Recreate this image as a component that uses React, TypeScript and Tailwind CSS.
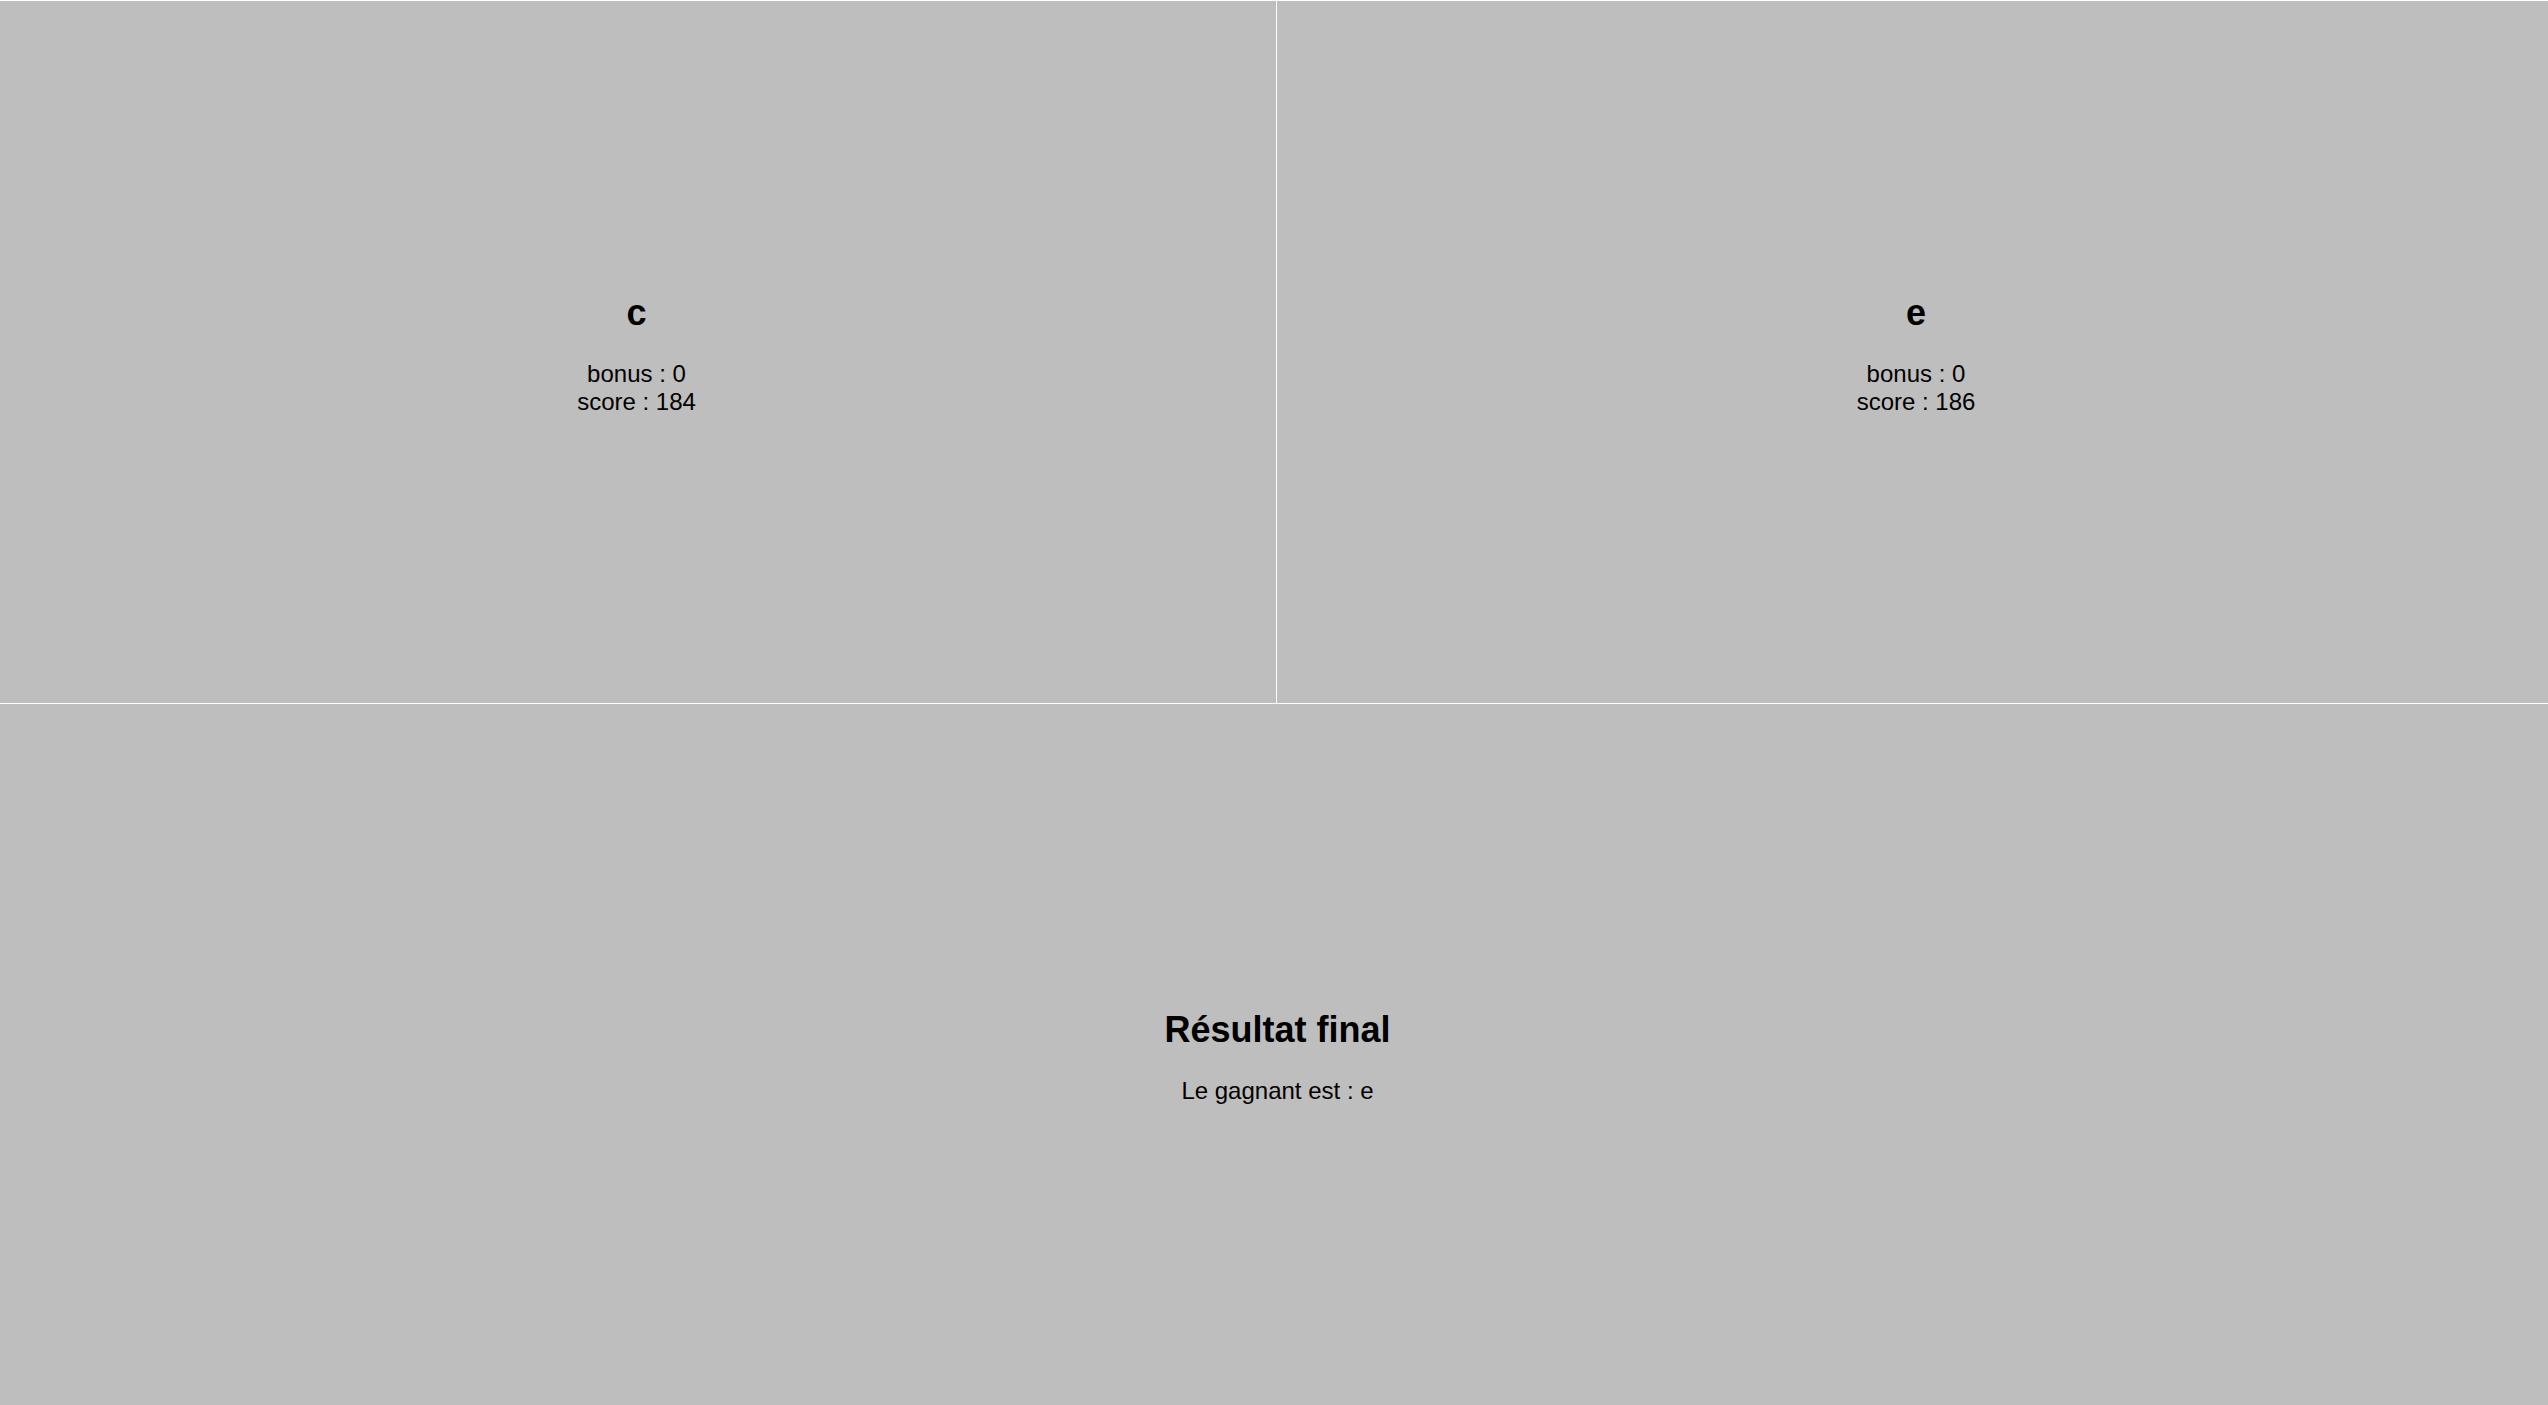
const players = [
  { name: 'c', bonus: 0, score: 184 },
  { name: 'e', bonus: 0, score: 186 },
];

export default function App() {
  const winner = players.reduce((a, b) => (b.score > a.score ? b : a));

  return (
    <div
      className="h-screen w-screen overflow-hidden bg-white text-black"
      style={{ fontFamily: '"Liberation Sans", Arial, sans-serif' }}
    >
      <div className="w-[2555px] pt-px grid grid-rows-[702px_706px] gap-px">
        {/* Players */}
        <div className="grid grid-cols-[1276px_1fr] gap-px">
          {players.map((p, i) => (
            <div
              key={p.name}
              className={
                i === 0
                  ? 'bg-[#bebebe] pt-[3px] pr-[3px] flex flex-col items-center justify-center'
                  : 'bg-[#bebebe] pt-[3px] flex flex-col items-center justify-center'
              }
            >
              <h2 className="text-[36px] leading-[41px] font-bold">{p.name}</h2>
              <div className="mt-[27px] text-[24px] leading-[28px] text-center">
                <p>bonus : {p.bonus}</p>
                <p>score : {p.score}</p>
              </div>
            </div>
          ))}
        </div>

        {/* Result */}
        <div className="bg-[#bebebe] flex flex-col items-center justify-center">
          <h2 className="text-[36px] leading-[41px] font-bold">Résultat final</h2>
          <p className="mt-[27px] text-[24px] leading-[28px]">Le gagnant est : {winner.name}</p>
        </div>
      </div>
    </div>
  );
}
